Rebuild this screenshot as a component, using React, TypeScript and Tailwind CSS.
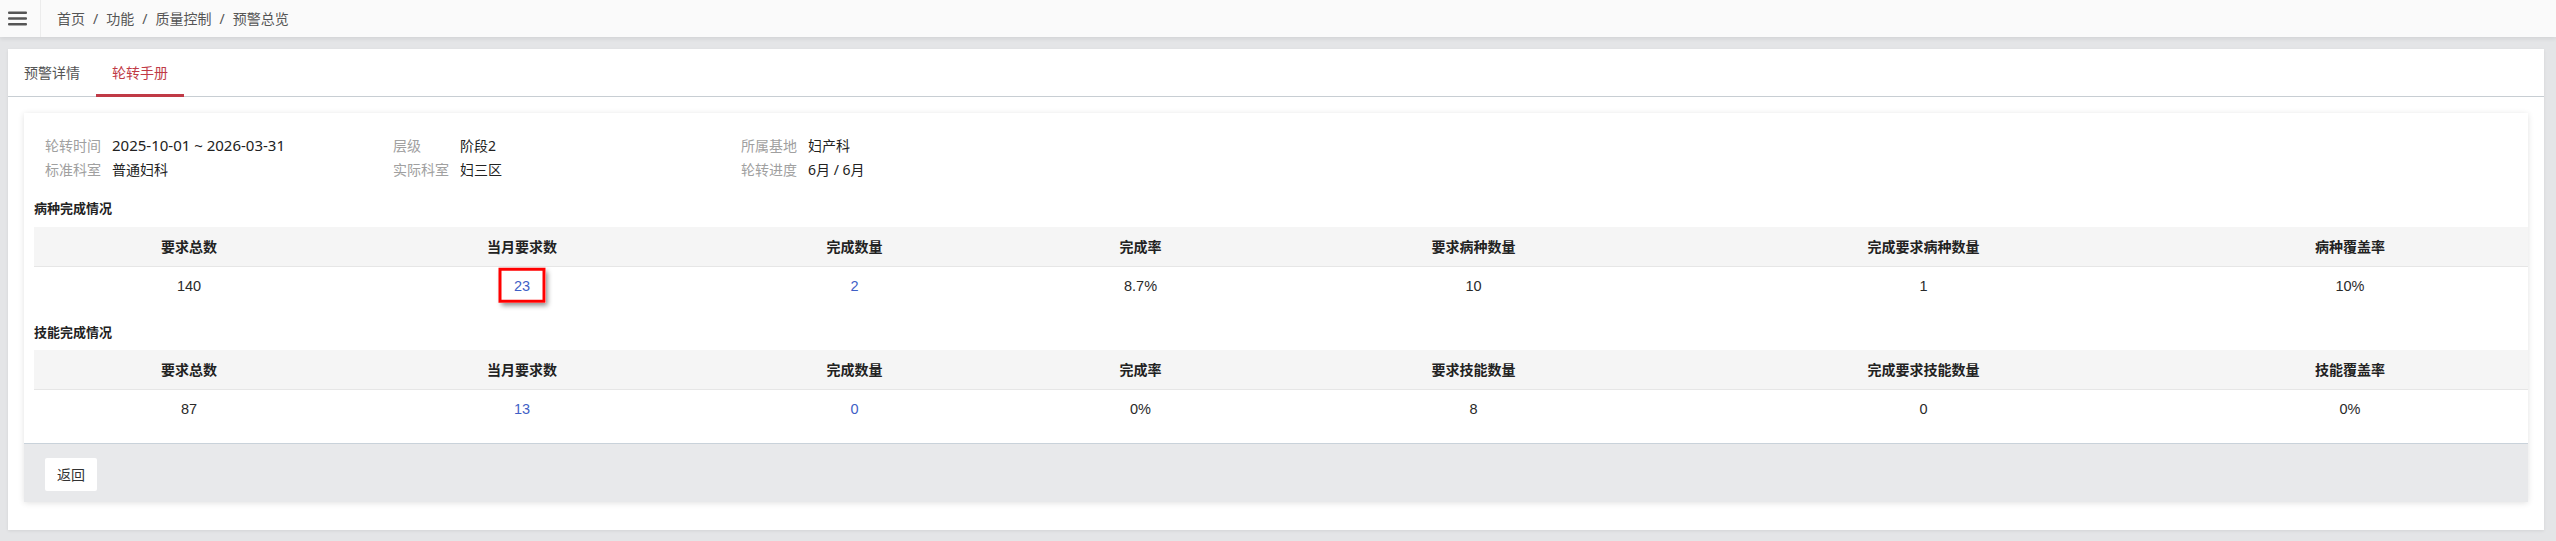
import React from "react";

type Cell = { v: string; link?: boolean; mark?: boolean };

const diseaseHead = ["要求总数", "当月要求数", "完成数量", "完成率", "要求病种数量", "完成要求病种数量", "病种覆盖率"];
const diseaseRow: Cell[] = [
  { v: "140" },
  { v: "23", link: true, mark: true },
  { v: "2", link: true },
  { v: "8.7%" },
  { v: "10" },
  { v: "1" },
  { v: "10%" },
];

const skillHead = ["要求总数", "当月要求数", "完成数量", "完成率", "要求技能数量", "完成要求技能数量", "技能覆盖率"];
const skillRow: Cell[] = [
  { v: "87" },
  { v: "13", link: true },
  { v: "0", link: true },
  { v: "0%" },
  { v: "8" },
  { v: "0" },
  { v: "0%" },
];

const rowGrid = "grid grid-cols-[310px_356px_309px_263px_403px_497px_1fr]";

function StatTable({ head, row }: { head: string[]; row: Cell[] }) {
  return (
    <div className="w-full">
      <div className={`${rowGrid} h-[40px] bg-[#f5f5f5] border-b border-[#e6e6e6]`}>
        {head.map((h) => (
          <div key={h} className="flex items-center justify-center text-[14px] font-bold text-[#222]">
            {h}
          </div>
        ))}
      </div>
      <div className={`${rowGrid} h-[40px]`}>
        {row.map((c, i) => (
          <div
            key={i}
            className="flex items-center justify-center text-[14.5px] font-['Liberation_Sans','Noto_Sans_CJK_SC',sans-serif]"
          >
            <span className={`relative ${c.link ? "text-[#3f5fc6]" : "text-[#2a2a2a]"}`}>
              {c.v}
              {c.mark && (
                <span className="absolute left-1/2 top-1/2 -translate-x-1/2 -translate-y-[55%] w-[47px] h-[35px] border-[3px] border-[#ff0000] shadow-[2px_3px_5px_rgba(0,0,0,0.45)]" />
              )}
            </span>
          </div>
        ))}
      </div>
    </div>
  );
}

function InfoItem({ label, value, wide }: { label: string; value: string; wide?: boolean }) {
  return (
    <div className="flex h-[24px] items-center text-[14px]">
      <span className="w-[67px] shrink-0 text-[#a0a0a0]">{label}</span>
      <span className={`text-[#222] ${wide ? "text-[15px]" : ""}`}>{value}</span>
    </div>
  );
}

export default function App() {
  return (
    <div className="w-[2556px] h-[541px] bg-[#e4e5e7] font-['Noto_Sans','Noto_Sans_CJK_SC',sans-serif] flex flex-col overflow-hidden">
      {/* top bar */}
      <header className="h-[37px] shrink-0 bg-[#fafafa] flex items-stretch shadow-[0_2px_4px_rgba(0,0,0,0.08)] relative z-10">
        <div className="w-[41px] border-r border-[#ececec] flex items-center justify-center">
          <svg width="19" height="15" viewBox="0 0 19 15" className="-ml-[5px]">
            <rect x="0" y="0.5" width="19" height="2.6" rx="1" fill="#555" />
            <rect x="0" y="6.2" width="19" height="2.6" rx="1" fill="#555" />
            <rect x="0" y="11.9" width="19" height="2.6" rx="1" fill="#555" />
          </svg>
        </div>
        <nav className="flex items-center pl-[16px] text-[14px] text-[#555]">
          <span>首页</span>
          <span className="px-[8px]">/</span>
          <span>功能</span>
          <span className="px-[8px]">/</span>
          <span>质量控制</span>
          <span className="px-[8px]">/</span>
          <span>预警总览</span>
        </nav>
      </header>

      {/* main area */}
      <main className="flex-1 pt-[12px] pl-[8px] pr-[12px] pb-[11px]">
        <div className="h-full bg-white shadow-[0_1px_3px_rgba(0,0,0,0.08)] flex flex-col">
          {/* tabs */}
          <div className="h-[48px] border-b border-[#c8ced3] flex items-stretch text-[14px]">
            <div className="px-[16px] flex items-center text-[#555]">预警详情</div>
            <div className="px-[16px] flex items-center text-[#c03a46] relative">
              轮转手册
              <span className="absolute left-0 right-0 -bottom-px h-[3px] bg-[#c03a46]" />
            </div>
          </div>

          <div className="flex-1 pt-[16px] pl-[16px] pr-[16px] pb-[27px]">
            <div className="bg-white shadow-[0_1px_6px_rgba(0,0,0,0.12)] flex flex-col">
              <div className="pl-[10px] pt-[20px] pb-[13px]">
                {/* info block */}
                <div className="pl-[11px] grid grid-cols-[348px_348px_348px]">
                  <div>
                    <InfoItem label="轮转时间" value="2025-10-01 ~ 2026-03-31" wide />
                    <InfoItem label="标准科室" value="普通妇科" />
                  </div>
                  <div>
                    <InfoItem label="层级" value="阶段2" />
                    <InfoItem label="实际科室" value="妇三区" />
                  </div>
                  <div>
                    <InfoItem label="所属基地" value="妇产科" />
                    <InfoItem label="轮转进度" value="6月 / 6月" />
                  </div>
                </div>

                <h3 className="mt-[17px] mb-[9px] h-[20px] leading-[20px] text-[13px] font-bold text-[#222]">病种完成情况</h3>
                <StatTable head={diseaseHead} row={diseaseRow} />

                <h3 className="mt-[15px] mb-[8px] h-[20px] leading-[20px] text-[13px] font-bold text-[#222]">技能完成情况</h3>
                <StatTable head={skillHead} row={skillRow} />
              </div>

              {/* footer */}
              <div className="h-[59px] border-t border-[#c9d2da] bg-[#e8e9eb] pl-[21px] pt-[14px]">
                <button className="w-[52px] h-[33px] bg-white rounded-[2px] text-[14px] text-[#333]">返回</button>
              </div>
            </div>
          </div>
        </div>
      </main>
    </div>
  );
}
